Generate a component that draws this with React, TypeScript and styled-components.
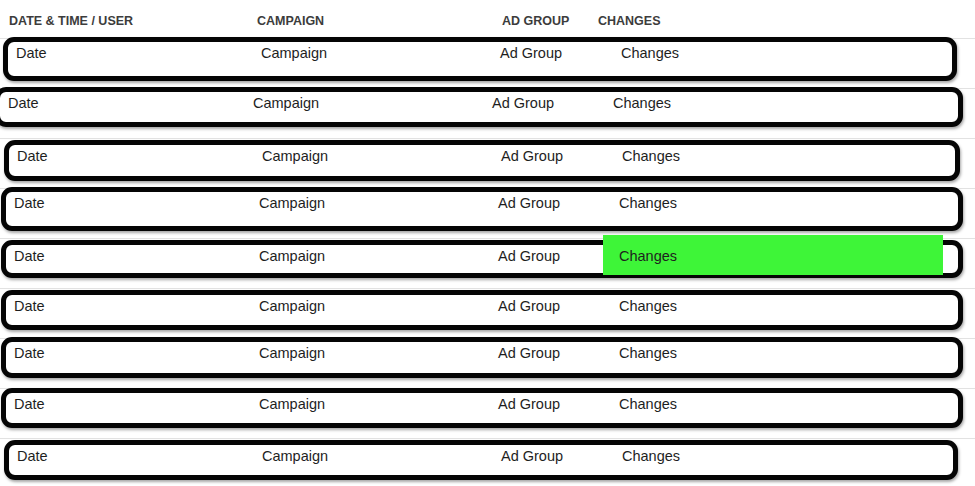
import React from "react";
import styled, { createGlobalStyle } from "styled-components";

interface RowSpec {
  dx: number;
  dy: number;
  width: number;
  height: number;
  highlight?: boolean;
}

const rows: RowSpec[] = [
  { dx: 3, dy: -2, width: 954, height: 44 },
  { dx: -5, dy: -2, width: 968, height: 40 },
  { dx: 4, dy: 1, width: 956, height: 41 },
  { dx: 1, dy: -2, width: 962, height: 44 },
  { dx: 1, dy: 1, width: 962, height: 38, highlight: true },
  { dx: 1, dy: 1, width: 962, height: 40 },
  { dx: 1, dy: -2, width: 962, height: 41 },
  { dx: 1, dy: -1, width: 962, height: 40 },
  { dx: 4, dy: 1, width: 954, height: 40 },
];

const GlobalStyle = createGlobalStyle`
  html, body {
    margin: 0;
    padding: 0;
    background: #ffffff;
    overflow: hidden;
  }
  body {
    font-family: "Liberation Sans", Arial, sans-serif;
  }
`;

const Table = styled.div`
  width: 975px;
`;

const HeaderRow = styled.div`
  display: grid;
  grid-template-columns: 248px 245px 96px 1fr;
  align-items: center;
  height: 38px;
  padding-left: 9px;
  border-bottom: 1px solid #e2e2e2;
  box-sizing: border-box;
  height: 39px;
`;

const HeaderCell = styled.div`
  font-size: 12.5px;
  font-weight: bold;
  color: #3c3c3c;
  text-transform: uppercase;
  padding-top: 3px;
`;

const Row = styled.div`
  display: flex;
  align-items: flex-start;
  height: 50px;
  border-bottom: 1px solid #e2e2e2;
  box-sizing: border-box;
`;

const Box = styled.div<{ $dx: number; $dy: number; $w: number; $h: number }>`
  display: grid;
  grid-template-columns: 253px 239px 105px 340px;
  align-items: start;
  flex: none;
  margin-left: ${(p) => p.$dx}px;
  margin-top: ${(p) => p.$dy}px;
  width: ${(p) => p.$w}px;
  height: ${(p) => p.$h}px;
  box-sizing: border-box;
  border: 5px solid #050505;
  border-radius: 11px;
  background: #ffffff;
  box-shadow: 1px 2px 3px rgba(0, 0, 0, 0.35);
  position: relative;
  z-index: 1;
`;

const Cell = styled.div<{ $pad?: number }>`
  font-size: 14.5px;
  line-height: 16px;
  color: #1e1e1e;
  padding-top: 3px;
  padding-left: ${(p) => p.$pad ?? 0}px;
`;

const ChangeCell = styled.div<{ $highlight?: boolean }>`
  font-size: 14.5px;
  line-height: 16px;
  color: #1e1e1e;
  padding-left: 16px;
  padding-top: ${(p) => (p.$highlight ? 13 : 3)}px;
  margin-top: ${(p) => (p.$highlight ? -10 : 0)}px;
  height: ${(p) => (p.$highlight ? 40 : 16)}px;
  box-sizing: border-box;
  background: ${(p) => (p.$highlight ? "#3ef538" : "transparent")};
`;

const App = () => {
  return (
    <>
      <GlobalStyle />
      <Table>
        <HeaderRow>
          <HeaderCell>Date &amp; Time / User</HeaderCell>
          <HeaderCell>Campaign</HeaderCell>
          <HeaderCell>Ad Group</HeaderCell>
          <HeaderCell>Changes</HeaderCell>
        </HeaderRow>
        {rows.map((r, i) => (
          <Row key={i}>
            <Box $dx={r.dx} $dy={r.dy} $w={r.width} $h={r.height}>
              <Cell $pad={8}>Date</Cell>
              <Cell>Campaign</Cell>
              <Cell>Ad Group</Cell>
              <ChangeCell $highlight={r.highlight}>Changes</ChangeCell>
            </Box>
          </Row>
        ))}
      </Table>
    </>
  );
};

export default App;
